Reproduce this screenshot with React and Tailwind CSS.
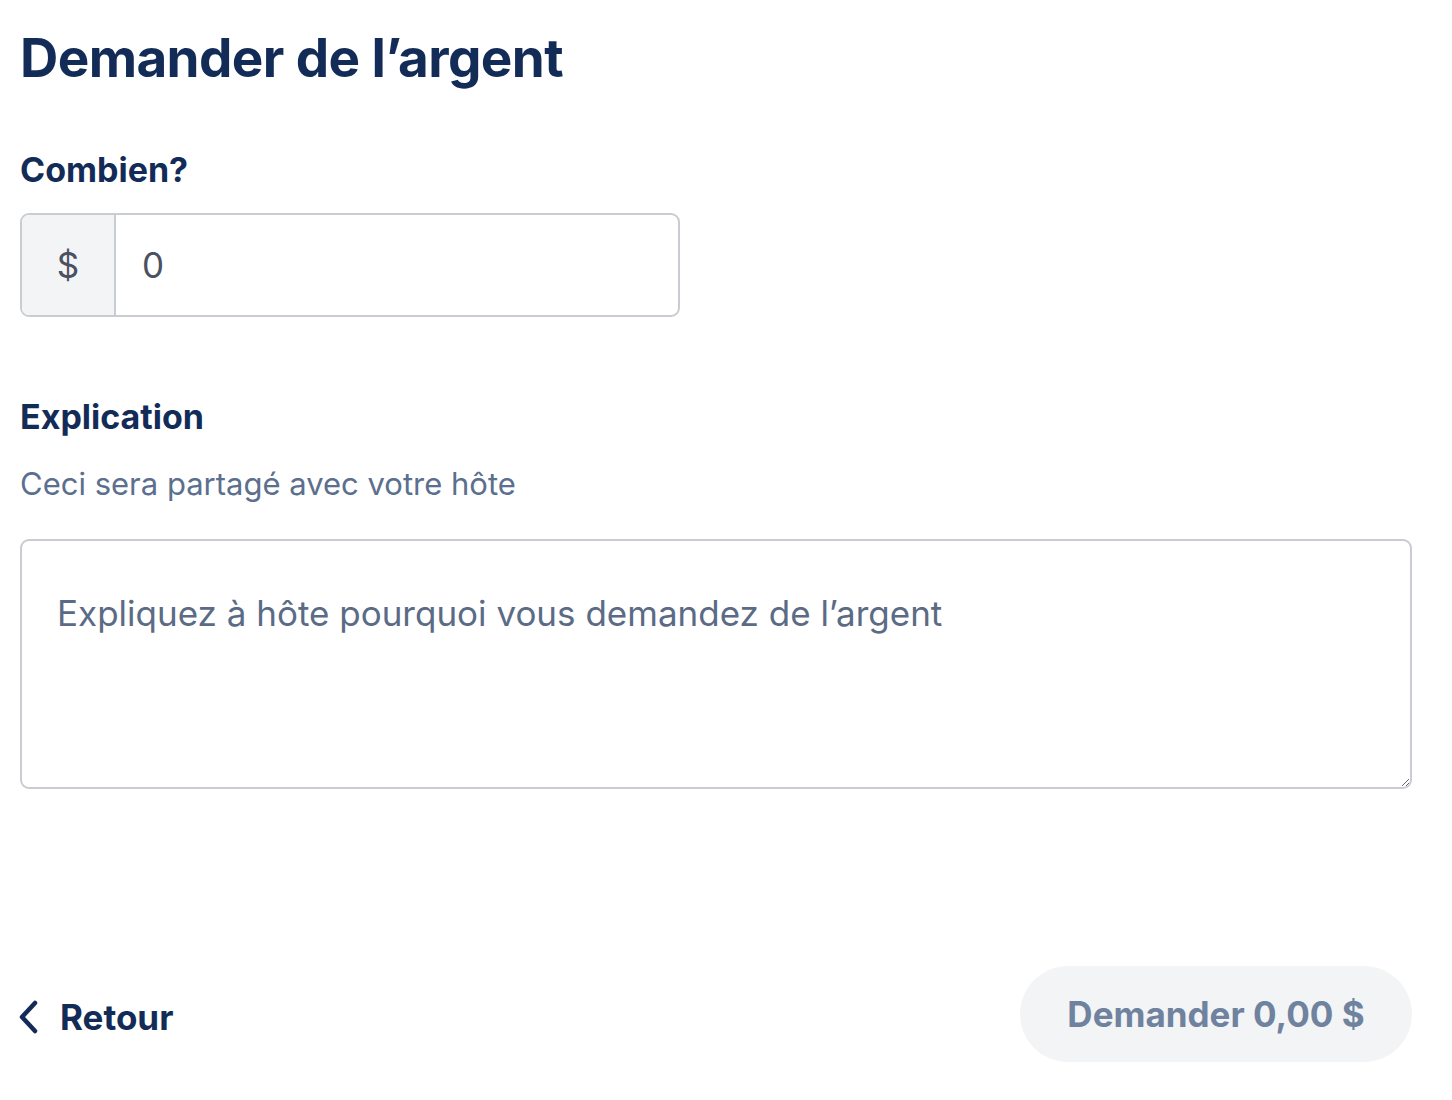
import React, { useState } from 'react';

const ChevronLeft = () => (
    <svg width="22" height="34" viewBox="0 0 22 34" fill="none" className="text-[#132c57]">
        <path d="M17 3 L4 17 L17 31" stroke="currentColor" strokeWidth="4.5" strokeLinecap="round" strokeLinejoin="round" />
    </svg>
);

const App = () => {
    const [amount, setAmount] = useState('0');
    const [note, setNote] = useState('');

    return (
        <div className="w-[1452px] h-[1100px] bg-white pl-5 font-['Inter',sans-serif]">
            <div className="w-[1392px] flex flex-col">
                <h1 className="text-[53px] font-bold text-[#132c57] tracking-[-0.6px] leading-none mt-[32px]">Demander de l’argent</h1>

                {/* Amount */}
                <label className="text-[34px] font-bold text-[#132c57] mt-[68px] leading-none">Combien?</label>
                <div className="flex mt-[26px] w-[660px] h-[104px] border-2 border-[#c9ccd1] rounded-[9px] overflow-hidden">
                    <div className="w-[94px] shrink-0 bg-[#f3f4f6] border-r-2 border-[#c9ccd1] flex items-center justify-center text-[35px] text-[#4b5160]">$</div>
                    <input
                        value={amount}
                        onChange={(e) => setAmount(e.target.value)}
                        className="flex-1 min-w-0 px-[26px] text-[35px] text-[#4b5160] outline-none"
                    />
                </div>

                {/* Explanation */}
                <label className="text-[34px] font-bold text-[#132c57] mt-[83px] leading-none">Explication</label>
                <p className="text-[31px] text-[#5b6f8e] mt-[34px] leading-none">Ceci sera partagé avec votre hôte</p>
                <textarea
                    value={note}
                    onChange={(e) => setNote(e.target.value)}
                    placeholder="Expliquez à hôte pourquoi vous demandez de l’argent"
                    className="mt-[40px] w-full h-[250px] border-2 border-[#c9ccd1] rounded-[9px] px-[35px] py-[50px] text-[35px] leading-[44px] text-[#4b5160] placeholder:text-[#5b6b86] outline-none resize-y"
                />

                <div className="flex items-center justify-between mt-[177px]">
                    <button className="flex items-center gap-[20px] text-[35px] font-bold text-[#132c57] mt-[6px] -ml-[2px]">
                        <ChevronLeft />
                        Retour
                    </button>
                    <button className="w-[392px] h-[96px] rounded-full bg-[#f3f4f6] text-[35px] font-bold text-[#6f829e]">
                        Demander 0,00 $
                    </button>
                </div>
            </div>
        </div>
    );
};

export default App;
